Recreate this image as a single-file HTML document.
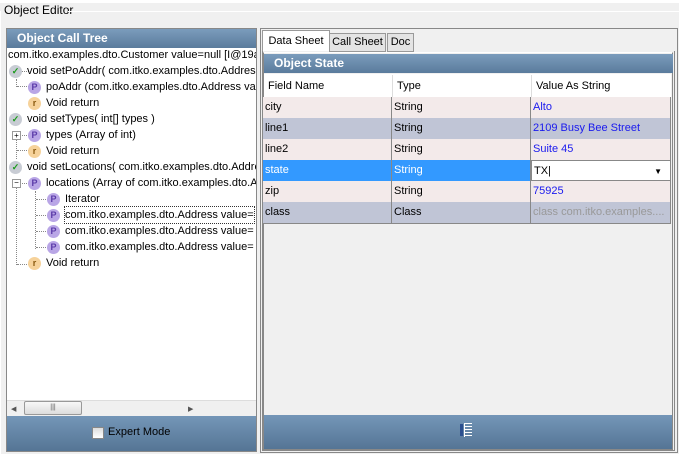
<html><head><style>
body{margin:0;width:679px;height:454px;background:#f0f0f0;font-family:"Liberation Sans",sans-serif;font-size:11px;position:relative;overflow:hidden;color:#000}
.a{position:absolute}
.hdr{background:linear-gradient(#7b9cbc,#5a7b9c);color:#fff;font-weight:bold;font-size:12px;padding-left:10px;line-height:19px}
.ft{background:linear-gradient(#7496b8,#557595)}
.t{position:absolute;white-space:nowrap;line-height:16px}
.ic{position:absolute;width:13px;height:13px;border-radius:50%;font-size:9px;line-height:13px;text-align:center;font-weight:bold}
.m{background:#c8ccd4;color:#1a9a1a}
.p{background:#b9a6e6;color:#5a3aa8}
.r{background:#f6d29a;color:#8a5a10}
.hl{position:absolute;border-top:1px dotted #888;height:0}
.vl{position:absolute;border-left:1px dotted #888;width:0}
.row{position:absolute;left:263px;width:408px;height:21px;border-bottom:1px solid #888}
.row div{position:absolute;top:0;height:21px;line-height:21px;padding-left:2px;border-right:1px solid #888;box-sizing:border-box}
.c1{left:0;width:129px}.c2{left:129px;width:139px}.c3{left:268px;width:140px;color:#1a1aee}
.o{background:#f3eaea}.e{background:#c0c5d6}
</style></head><body>
<div class="a" style="left:0;top:0;width:679px;height:3px;background:#fff"></div>
<div class="a" style="left:4px;top:3px;font-size:12px">Object Editor</div>
<div class="a" style="left:68px;top:11px;width:611px;border-top:1px solid #fff"></div>
<div class="a" style="left:0;top:11px;width:2px;height:443px;border-left:1px solid #fff"></div>
<div class="a" style="left:6px;top:28px;width:251px;height:424px;border:1px solid #888;box-sizing:border-box;background:#fff"></div>
<div class="a hdr" style="left:7px;top:29px;width:239px">Object Call Tree</div>
<div class="a" style="left:7px;top:48px;width:249px;height:352px;overflow:hidden">
<div class="t" style="left:1px;top:-1px">com.itko.examples.dto.Customer value=null [I@19a</div>
<div class="vl" style="left:9px;top:31px;height:8px"></div><div class="vl" style="left:9px;top:87px;height:24px"></div><div class="vl" style="left:9px;top:135px;height:82px"></div>
<div class="hl" style="left:10px;top:23px;width:12px"></div><div class="hl" style="left:10px;top:38px;width:12px"></div>
<div class="hl" style="left:10px;top:87px;width:12px"></div><div class="hl" style="left:10px;top:102px;width:12px"></div>
<div class="hl" style="left:10px;top:135px;width:12px"></div><div class="hl" style="left:10px;top:216px;width:12px"></div>
<div class="vl" style="left:28px;top:143px;height:58px"></div>
<div class="hl" style="left:29px;top:151px;width:12px"></div><div class="hl" style="left:29px;top:167px;width:12px"></div><div class="hl" style="left:29px;top:183px;width:12px"></div><div class="hl" style="left:29px;top:199px;width:12px"></div>
<div class="ic m" style="left:2px;top:17px">✓</div><div class="t" style="left:20px;top:15px">void setPoAddr( com.itko.examples.dto.Address</div>
<div class="ic p" style="left:21px;top:33px">P</div><div class="t" style="left:39px;top:31px">poAddr (com.itko.examples.dto.Address va</div>
<div class="ic r" style="left:21px;top:49px">r</div><div class="t" style="left:39px;top:47px">Void return</div>
<div class="ic m" style="left:2px;top:65px">✓</div><div class="t" style="left:20px;top:63px">void setTypes( int[] types )</div>
<div class="a" style="left:5px;top:83px;width:7px;height:7px;border:1px solid #999;background:#fff;font-size:8px;line-height:7px;text-align:center">+</div>
<div class="ic p" style="left:21px;top:81px">P</div><div class="t" style="left:39px;top:79px">types (Array of int)</div>
<div class="ic r" style="left:21px;top:97px">r</div><div class="t" style="left:39px;top:95px">Void return</div>
<div class="ic m" style="left:2px;top:113px">✓</div><div class="t" style="left:20px;top:111px">void setLocations( com.itko.examples.dto.Addre</div>
<div class="a" style="left:5px;top:131px;width:7px;height:7px;border:1px solid #999;background:#fff;font-size:8px;line-height:6px;text-align:center">−</div>
<div class="ic p" style="left:21px;top:129px">P</div><div class="t" style="left:39px;top:127px">locations (Array of com.itko.examples.dto.A</div>
<div class="ic p" style="left:40px;top:145px">P</div><div class="t" style="left:58px;top:143px">Iterator</div>
<div class="ic p" style="left:40px;top:161px">P</div><div class="t" style="left:58px;top:159px;outline:1px dotted #333">com.itko.examples.dto.Address value=</div>
<div class="ic p" style="left:40px;top:177px">P</div><div class="t" style="left:58px;top:175px">com.itko.examples.dto.Address value=</div>
<div class="ic p" style="left:40px;top:193px">P</div><div class="t" style="left:58px;top:191px">com.itko.examples.dto.Address value=</div>
<div class="ic r" style="left:21px;top:209px">r</div><div class="t" style="left:39px;top:207px">Void return</div>
</div>
<div class="a" style="left:7px;top:400px;width:249px;height:16px;background:#f0f0f0;border-top:1px solid #ddd"></div>
<div class="a" style="left:11px;top:405px;font-size:7px;color:#555">◀</div>
<div class="a" style="left:24px;top:401px;width:56px;height:12px;border:1px solid #999;border-radius:2px;background:linear-gradient(#f8f8f8,#dcdcdc);font-size:7px;text-align:center;line-height:12px;color:#555">|||</div>
<div class="a" style="left:188px;top:405px;font-size:7px;color:#555">▶</div>
<div class="a ft" style="left:7px;top:416px;width:249px;height:35px"></div>
<div class="a" style="left:92px;top:427px;width:10px;height:10px;border:1px solid #888;background:linear-gradient(#ddd,#fff)"></div>
<div class="a" style="left:108px;top:426px;font-size:11px">Expert Mode</div>
<div class="a" style="left:260px;top:28px;width:418px;height:425px;border:1px solid #888;box-sizing:border-box;background:#f0f0f0"></div>
<div class="a" style="left:262px;top:30px;width:66px;height:20px;border:1px solid #999;border-bottom:none;background:#fff;line-height:20px;text-align:center">Data Sheet</div>
<div class="a" style="left:329px;top:33px;width:55px;height:17px;border:1px solid #999;background:#e4e4e4;line-height:17px;text-align:center">Call Sheet</div>
<div class="a" style="left:387px;top:33px;width:25px;height:17px;border:1px solid #999;background:#e4e4e4;line-height:17px;text-align:center">Doc</div>
<div class="a" style="left:262px;top:51px;width:413px;height:400px;border:1px solid #888;border-top:none;box-sizing:border-box"></div>
<div class="a" style="left:263px;top:52px;width:410px;border:1px solid #888;border-top-color:#fff;height:398px;box-sizing:border-box"></div>
<div class="a hdr" style="left:264px;top:54px;width:399px;font-size:12px">Object State</div>
<div class="a" style="left:264px;top:74px;width:407px;height:23px;background:#fff;border-bottom:1px solid #999"></div>
<div class="a" style="left:268px;top:80px">Field Name</div><div class="a" style="left:397px;top:80px">Type</div><div class="a" style="left:536px;top:80px">Value As String</div>
<div class="a" style="left:392px;top:75px;width:1px;height:22px;background:#ddd"></div><div class="a" style="left:531px;top:75px;width:1px;height:22px;background:#ddd"></div>
<div class="row o" style="top:97px"><div class="c1">city</div><div class="c2">String</div><div class="c3">Alto</div></div>
<div class="row e" style="top:118px"><div class="c1">line1</div><div class="c2">String</div><div class="c3">2109 Busy Bee Street</div></div>
<div class="row o" style="top:139px"><div class="c1">line2</div><div class="c2">String</div><div class="c3">Suite 45</div></div>
<div class="row" style="top:160px"><div class="c1" style="background:#3399ff;color:#fff">state</div><div class="c2" style="background:#3399ff;color:#fff">String</div><div class="c3" style="background:#fff;color:#000;border:1px solid #888">TX|<span style="position:absolute;right:8px;font-size:8px">▼</span></div></div>
<div class="row o" style="top:181px"><div class="c1">zip</div><div class="c2">String</div><div class="c3">75925</div></div>
<div class="row e" style="top:202px"><div class="c1">class</div><div class="c2">Class</div><div class="c3" style="color:#999">class com.itko.examples....</div></div>
<div class="a ft" style="left:264px;top:415px;width:408px;height:34px"></div>
<div class="a" style="left:460px;top:424px;width:3px;height:12px;background:#2b4f8f"></div>
<div class="a" style="left:464px;top:423px;width:7px;height:14px;border-left:1px solid #fff;background:repeating-linear-gradient(#fff 0 1px,transparent 1px 3px)"></div>
</body></html>
